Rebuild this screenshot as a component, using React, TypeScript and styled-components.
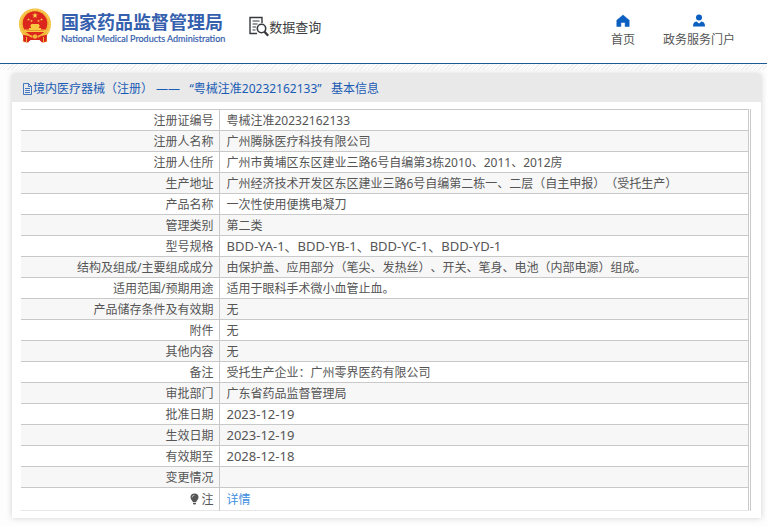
import React from "react";
import styled, { createGlobalStyle } from "styled-components";

const GlobalStyle = createGlobalStyle`
  *, *::before, *::after { box-sizing: border-box; }
  body {
    margin: 0;
    background: #fdfdfd;
    color: #555;
    font: 12px/20px "Noto Sans", "Noto Sans CJK SC", sans-serif;
    text-spacing-trim: space-all;
  }
`;

const Header = styled.header`
  display: flex;
  align-items: flex-start;
  height: 64px;
  padding: 8px 32px 0 18px;
  background: #fff;
  border-bottom: 1px solid #1a5c93;
`;

const Brand = styled.a`
  display: flex;
  gap: 9px;
  color: #3560ae;
  text-decoration: none;
  white-space: nowrap;
`;

const BrandText = styled.span`
  display: flex;
  flex-direction: column;
`;

const BrandName = styled.strong`
  font: 700 18px/26px "Noto Sans CJK SC", sans-serif;
`;

const BrandLatin = styled.span`
  font: 400 9px/10px Lato, sans-serif;
  -webkit-text-stroke: 0.2px #3560ae;
`;

const Query = styled.a`
  display: flex;
  align-items: center;
  margin: 8px 0 0 24px;
  color: #3b3d40;
  font: 13px/20px "Noto Sans CJK SC", sans-serif;
  text-decoration: none;
  white-space: nowrap;
`;

const Nav = styled.nav`
  display: flex;
  gap: 28px;
  margin-left: auto;
  padding-top: 6px;
`;

const NavLink = styled.a`
  display: flex;
  flex-direction: column;
  align-items: center;
  gap: 2px;
  color: #555;
  line-height: 20px;
  text-decoration: none;
  white-space: nowrap;
`;

const Main = styled.main`
  padding: 10px 6px 8px 12px;
  background: repeating-linear-gradient(135deg, #f0f0f0 0 1px, #fdfdfd 1px 3px) top / 100% 6px no-repeat;
`;

const Card = styled.section`
  background: #fff;
  box-shadow: 0 0 6px rgba(0, 0, 0, 0.18);
`;

const Title = styled.h1`
  display: flex;
  align-items: center;
  height: 28px;
  margin: 0;
  padding: 2px 10px 0;
  background: #e9e9e9;
  color: #1a5cb5;
  font-size: 12px;
  font-weight: 400;
  white-space: pre;
`;

const TableFrame = styled.div`
  margin: 7px 10px 0 9px;
  padding-right: 1px;
  border-right: 1px solid #c9c9c9;
`;

const CardBody = styled.div`
  display: flow-root;
  padding-bottom: 7px;
`;

const Table = styled.table`
  width: 100%;
  border-collapse: collapse;
  border-right: 1px solid #c9c9c9;
  border-bottom: 1px solid #e6e6e6;
`;

const Row = styled.tr`
  height: 21px;
  border-top: 1px solid #c9c9c9;
  &:nth-child(even) { background: #f7f7f7; }
  &:last-child { height: 23px; }
`;

const Label = styled.th`
  width: 198px;
  padding: 2px 5px 0 0;
  border-right: 1px solid #c9c9c9;
  font-weight: 400;
  text-align: right;
  line-height: 18px;
`;

const Value = styled.td<{ $code?: boolean }>`
  padding: ${({ $code }) => ($code ? 0 : 2)}px 7px 0;
  font-size: ${({ $code }) => ($code ? 13 : 12)}px;
  line-height: 18px;
`;

const DetailLink = styled.a`
  color: #3d8de0;
  text-decoration: none;
`;

const BulbIcon = styled.svg`
  margin-right: 2px;
  vertical-align: -1px;
`;

const rows: [string, string][] = [
  ["注册证编号", "粤械注准20232162133"],
  ["注册人名称", "广州腾脉医疗科技有限公司"],
  ["注册人住所", "广州市黄埔区东区建业三路6号自编第3栋2010、2011、2012房"],
  ["生产地址", "广州经济技术开发区东区建业三路6号自编第二栋一、二层（自主申报）（受托生产）"],
  ["产品名称", "一次性使用便携电凝刀"],
  ["管理类别", "第二类"],
  ["型号规格", "BDD-YA-1、BDD-YB-1、BDD-YC-1、BDD-YD-1"],
  ["结构及组成/主要组成成分", "由保护盖、应用部分（笔尖、发热丝）、开关、笔身、电池（内部电源）组成。"],
  ["适用范围/预期用途", "适用于眼科手术微小血管止血。"],
  ["产品储存条件及有效期", "无"],
  ["附件", "无"],
  ["其他内容", "无"],
  ["备注", "受托生产企业：广州零界医药有限公司"],
  ["审批部门", "广东省药品监督管理局"],
  ["批准日期", "2023-12-19"],
  ["生效日期", "2023-12-19"],
  ["有效期至", "2028-12-18"],
  ["变更情况", ""],
];

const star = (cx: number, cy: number, r: number) =>
  Array.from({ length: 10 }, (_, i) => {
    const a = (Math.PI * i) / 5 - Math.PI / 2;
    const d = i % 2 ? r * 0.4 : r;
    return `${cx + d * Math.cos(a)},${cy + d * Math.sin(a)}`;
  }).join(" ");

const Emblem = () => (
  <svg width="34" height="36" viewBox="0 0 34 36" aria-hidden="true">
    <path d="M17 .6C8 .6 1 7.300 1 16c0 5 2 9 4.500 12l-.8 5.500 4 1.300 3-2.800h10.600l3 2.800 4-1.300-.8-5.500C31 25 33 21 33 16 33 7.300 26 .6 17 .6Z" fill="#f3b83a" />
    <path d="M17 1.600C8.500 1.600 2.200 8 2.200 16c0 4 1.300 7.500 3.800 10.500M17 1.600C25.500 1.600 31.800 8 31.800 16c0 4-1.300 7.500-3.800 10.500" fill="none" stroke="#f7cf58" strokeWidth="1.500" strokeDasharray="2 1" />
    <circle cx="17" cy="15.500" r="12.300" fill="#dc251c" />
    <polygon points={star(17, 7.5, 3)} fill="#f9d453" />
    <polygon points={star(10.5, 11.5, 1.5)} fill="#f9d453" />
    <polygon points={star(13.5, 13, 1.4)} fill="#f9d453" />
    <polygon points={star(20.5, 13, 1.4)} fill="#f9d453" />
    <polygon points={star(23.5, 11.5, 1.5)} fill="#f9d453" />
    <path d="m12 18 1.500-2h7l1.500 2-1 .8v1.200h2v1.500h4.500v2.500h-21v-2.500H11V20h2v-1.200Z" fill="#f8c843" />
    <path d="M8 22.500h18" stroke="#de5e20" strokeWidth=".5" />
    <path d="M5 26.500c3 1.500 6 .5 8 3h8c2-2.500 5-1.500 8-3l-.5 7-4.500 1-2.500-2.500h-9L10 34.500l-4.500-1Z" fill="#d9231c" />
    <path d="M8.500 29v5M25.500 29v5" stroke="#f3b83a" strokeWidth="1" />
    <circle cx="17" cy="28.500" r="2.600" fill="#f3b83a" stroke="#d9231c" strokeWidth=".7" />
  </svg>
);

const QueryIcon = () => (
  <svg width="20" height="21" viewBox="0 0 20 21" fill="none" stroke="#37393c" aria-hidden="true">
    <path d="M8 17.500H1V1.500h12V7" strokeWidth="1.400" />
    <path d="M3.500 5h7M3.500 8h5M3.500 11h3.500M3.500 14h3" strokeWidth="1.200" />
    <circle cx="12.500" cy="12.500" r="4.200" strokeWidth="1.600" />
    <path d="m15.500 15.800 3.700 4" strokeWidth="2.400" />
  </svg>
);

const HomeIcon = () => (
  <svg width="14" height="14" viewBox="0 0 14 14" fill="#0b5fc0" aria-hidden="true">
    <path d="M7 1 .8 6.200V12.500H4.900V8.500h4.200v4h4.100V6.200Z" stroke="#0b5fc0" strokeWidth=".5" strokeLinejoin="round" />
  </svg>
);

const UserIcon = () => (
  <svg width="14" height="14" viewBox="0 0 14 14" fill="#0b5fc0" aria-hidden="true">
    <circle cx="7" cy="3.500" r="3" />
    <path d="M1 12.500c0-3 1-4.500 3.500-5L7 9.500l2.500-2c2.500.5 3.500 2 3.500 5Z" />
  </svg>
);

const DocIcon = () => (
  <svg width="11" height="12" viewBox="0 0 11 12" fill="none" stroke="#1a5cb5" strokeWidth=".8" aria-hidden="true">
    <path d="M1.500.5h5l3 3v8h-8ZM6.500.5v3h3M3 5.500h5M3 7.500h5M3 9.500h5" />
  </svg>
);

export default function App() {
  return (
    <>
      <GlobalStyle />
      <Header>
        <Brand href="#">
          <Emblem />
          <BrandText>
            <BrandName>国家药品监督管理局</BrandName>
            <BrandLatin>National Medical Products Administration</BrandLatin>
          </BrandText>
        </Brand>
        <Query href="#">
          <QueryIcon />
          数据查询
        </Query>
        <Nav>
          <NavLink href="#">
            <HomeIcon />
            首页
          </NavLink>
          <NavLink href="#">
            <UserIcon />
            政务服务门户
          </NavLink>
        </Nav>
      </Header>
      <Main>
        <Card>
          <Title>
            <DocIcon />
            {"境内医疗器械（注册） ——   “粤械注准20232162133”   基本信息"}
          </Title>
          <CardBody>
            <TableFrame>
              <Table>
                <tbody>
                  {rows.map(([label, value]) => (
                    <Row key={label}>
                      <Label scope="row">{label}</Label>
                      <Value $code={/^[\dB]/.test(value)}>{value}</Value>
                    </Row>
                  ))}
                  <Row>
                    <Label scope="row">
                      <BulbIcon width="9" height="12" viewBox="0 0 9 12" aria-hidden="true">
                        <path d="M4.500.5a4 4 0 0 0-4 4C.5 6.500 2.500 7.500 2.800 9h3.400c.3-1.500 2.300-2.500 2.300-4.500a4 4 0 0 0-4-4ZM3 9.700h3v1L5.300 11.600H3.700L3 10.700Z" fill="#555" />
                        <path d="M2.200 4.500A2.300 2.300 0 0 1 4.500 2.200" fill="none" stroke="#ddd" strokeWidth=".7" />
                      </BulbIcon>
                      注
                    </Label>
                    <Value>
                      <DetailLink href="#">详情</DetailLink>
                    </Value>
                  </Row>
                </tbody>
              </Table>
            </TableFrame>
          </CardBody>
        </Card>
      </Main>
    </>
  );
}
